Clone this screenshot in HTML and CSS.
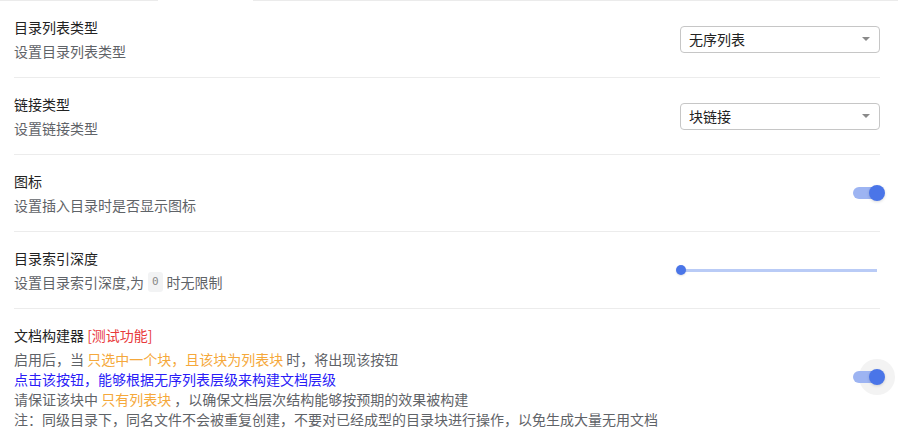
FILE: index.html
```html
<!DOCTYPE html>
<html lang="zh-CN">
<head>
    <meta charset="UTF-8">
    <title>目录设置</title>
    <link rel="stylesheet" href="styles.css">
</head>
<body>
    <div class="tab-line">
        <span class="rule rule-first"></span>
        <span class="gap"></span>
        <span class="rule rule-rest"></span>
    </div>
    <div class="panel">
        <!-- 目录列表类型 -->
        <div class="item">
            <div class="label">
                <div class="title">目录列表类型</div>
                <div class="desc">设置目录列表类型</div>
            </div>
            <div class="select">
                <span>无序列表</span>
                <svg width="8" height="4" viewBox="0 0 8 4"><path d="M0 0h8L4 4z" fill="#8a8a8a"/></svg>
            </div>
        </div>

        <!-- 链接类型 -->
        <div class="item">
            <div class="label">
                <div class="title">链接类型</div>
                <div class="desc">设置链接类型</div>
            </div>
            <div class="select">
                <span>块链接</span>
                <svg width="8" height="4" viewBox="0 0 8 4"><path d="M0 0h8L4 4z" fill="#8a8a8a"/></svg>
            </div>
        </div>

        <!-- 图标 -->
        <div class="item">
            <div class="label">
                <div class="title">图标</div>
                <div class="desc">设置插入目录时是否显示图标</div>
            </div>
            <div class="switch">
                <span class="track"></span>
                <span class="knob"></span>
            </div>
        </div>

        <!-- 目录索引深度 -->
        <div class="item">
            <div class="label">
                <div class="title">目录索引深度</div>
                <div class="desc">设置目录索引深度,为<code>0</code>时无限制</div>
            </div>
            <div class="slider">
                <span class="thumb"></span>
            </div>
        </div>

        <!-- 文档构建器 -->
        <div class="item last">
            <div class="label">
                <div class="title">文档构建器 <span class="red">[测试功能]</span></div>
                <div class="desc">启用后，当 <span class="orange">只选中一个块，且该块为列表块</span> 时，将出现该按钮</div>
                <div class="desc blue">点击该按钮，能够根据无序列表层级来构建文档层级</div>
                <div class="desc">请保证该块中 <span class="orange">只有列表块</span> ，以确保文档层次结构能够按预期的效果被构建</div>
                <div class="desc">注：同级目录下，同名文件不会被重复创建，不要对已经成型的目录块进行操作，以免生成大量无用文档</div>
            </div>
            <div class="switch focus">
                <span class="track"></span>
                <span class="knob"></span>
            </div>
        </div>
    </div>
</body>
</html>
```

FILE: styles.css
```css
/* Basic reset */
* {
    margin: 0;
    padding: 0;
    box-sizing: border-box;
}

body {
    font-family: "Noto Sans CJK SC", "Liberation Sans", sans-serif;
    font-size: 14px;
    color: #222;
    background-color: #fff;
    line-height: 20px;
}

/* Tab strip remains at the top */
.tab-line {
    display: flex;
    height: 1px;
}

.tab-line .rule {
    background-color: #ebebeb;
}

.tab-line .rule-first {
    width: 158px;
}

.tab-line .gap {
    width: 95px;
}

.tab-line .rule-rest {
    flex: 1;
}

/* Settings list */
.panel {
    padding: 0 18px 0 14px;
}

.item {
    display: flex;
    align-items: center;
    padding: 16px 0;
    border-bottom: 1px solid #ececec;
}

.item.last {
    border-bottom: none;
}

.label {
    flex: 1;
}

.title {
    color: #222;
    margin-bottom: 4px;
}

.desc {
    color: #5f6368;
}

.desc code {
    display: inline-block;
    font-family: "DejaVu Sans Mono", monospace;
    font-size: 11px;
    line-height: 20px;
    vertical-align: top;
    color: #888;
    background-color: #f2f3f4;
    border-radius: 3px;
    padding: 0 4px;
    margin: 0 4px;
}

.red {
    color: #e8393a;
}

.orange {
    color: #f5a83b;
}

.blue {
    color: #2a1cf7;
}

/* Select box */
.select {
    display: flex;
    align-items: center;
    justify-content: space-between;
    width: 200px;
    height: 27px;
    padding: 0 9px 0 8px;
    border: 1px solid #c6c6c6;
    border-radius: 4px;
    color: #222;
}

/* Switch */
.switch {
    position: relative;
    width: 32px;
    height: 16px;
    margin-right: -5px;
}

/* hover halo sits behind the track */
.switch.focus::before {
    content: "";
    position: absolute;
    right: -10px;
    top: -10px;
    width: 36px;
    height: 36px;
    border-radius: 50%;
    background-color: #f3f3f3;
}

.switch .track {
    position: absolute;
    left: 0;
    top: 2px;
    width: 26px;
    height: 12px;
    border-radius: 6px;
    background-color: #9db4f2;
}

.switch .knob {
    position: absolute;
    right: 0;
    top: 0;
    width: 16px;
    height: 16px;
    border-radius: 50%;
    background-color: #4a75e8;
    box-shadow: 0 1px 3px rgba(0, 0, 0, 0.15);
}

/* Slider */
.slider {
    position: relative;
    width: 196px;
    height: 3px;
    margin-right: 3px;
    background-color: #b9cbf6;
}

.slider .thumb {
    position: absolute;
    left: -5px;
    top: -4px;
    width: 10px;
    height: 10px;
    border-radius: 50%;
    background-color: #4a75e8;
    box-shadow: 0 1px 2px rgba(0, 0, 0, 0.12);
}
```
